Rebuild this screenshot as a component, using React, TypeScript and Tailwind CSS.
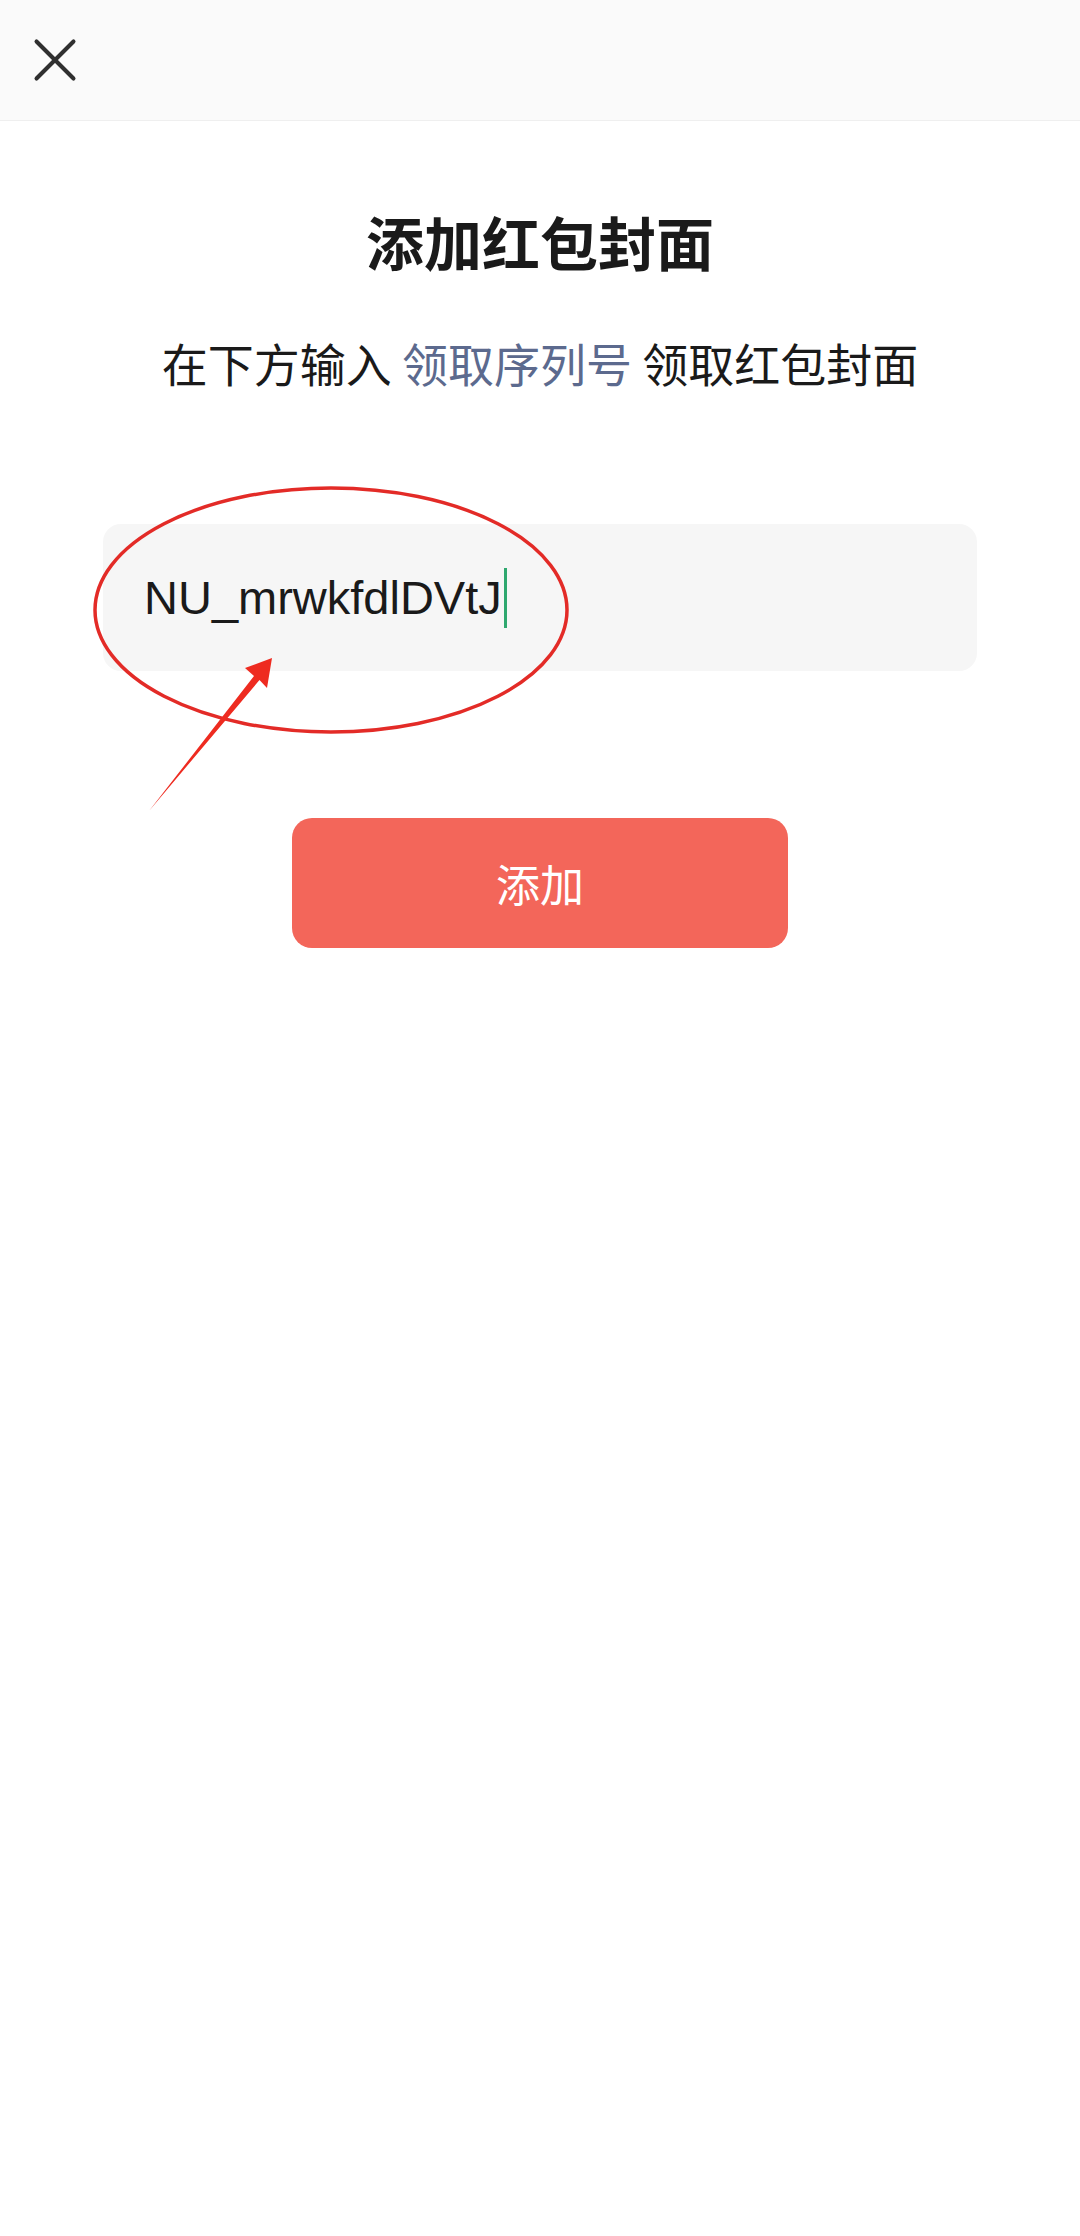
import { X } from "lucide-react"

const cjk = "font-['Noto_Sans_CJK_SC','Noto_Sans',sans-serif]"

function Annotation() {
  // red hand-drawn circle + arrow pointing at the code
  return (
    <svg
      className="pointer-events-none absolute left-0 top-0"
      width="1080"
      height="900"
      viewBox="0 0 1080 900"
    >
      <ellipse cx="331" cy="610" rx="236" ry="122" fill="none" stroke="#e32b27" strokeWidth="3.5" />
      <polygon
        points="149,811 254,676 245,668 272,658 267,688 259.5,680"
        fill="#ee2b20"
      />
    </svg>
  )
}

export default function App() {
  return (
    <div className={`relative min-h-[2236px] w-full bg-white ${cjk}`}>
      <div className="flex h-[121px] items-center border-b border-[#efefef] bg-[#fafafa] pl-[18px]">
        <button className="flex h-[74px] w-[74px] items-center justify-center text-[#2f2f2f]">
          <X className="h-[74px] w-[74px]" strokeWidth={1.3} />
        </button>
      </div>

      <div className="flex flex-col items-center">
        <h1 className="mt-[91px] text-[58px] font-semibold leading-[58px] text-[#1a1a1a]">
          添加红包封面
        </h1>
        <p className="mt-[69px] text-[46px] leading-[46px] text-[#1a1a1a]">
          在下方输入 <span className="text-[#5c6a8e]">领取序列号</span> 领取红包封面
        </p>

        <div className="mt-[139px] flex h-[147px] w-[874px] items-center rounded-[18px] bg-[#f6f6f6] pl-[41px]">
          <span className="font-['Liberation_Sans',sans-serif] text-[47px] leading-none text-[#1a1a1a]">
            NU_mrwkfdlDVtJ
          </span>
          <span className="ml-[2px] h-[60px] w-[3px] bg-[#2fa86f]" />
        </div>

        <button className="mt-[147px] flex h-[130px] w-[496px] items-center justify-center rounded-[20px] bg-[#f3665a] text-[44px] leading-none text-white">
          添加
        </button>
      </div>

      <Annotation />
    </div>
  )
}
